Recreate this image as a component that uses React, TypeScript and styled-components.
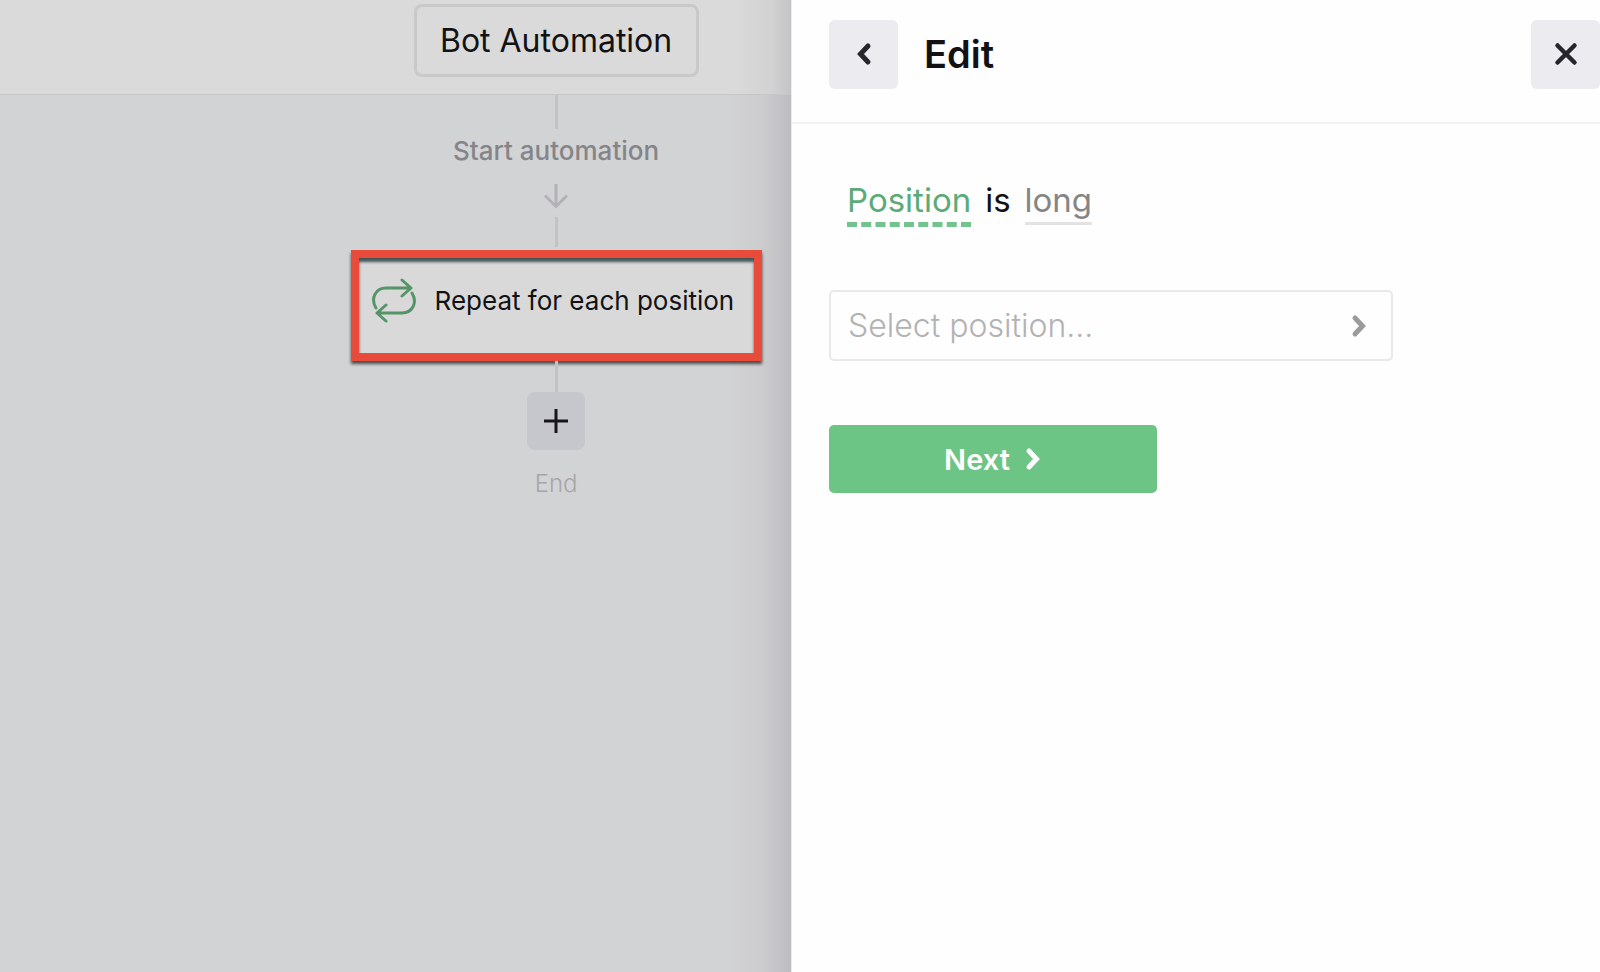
import React from "react";
import styled, { createGlobalStyle } from "styled-components";

const GlobalStyle = createGlobalStyle`
  *, *::before, *::after { box-sizing: border-box; }
  body {
    margin: 0;
    font-family: Inter, "Liberation Sans", sans-serif;
    color: #121214;
    background: #fefefe;
  }
  button, input, select { font: inherit; color: inherit; margin: 0; }
`;

const Page = styled.div`
  display: grid;
  grid-template-columns: minmax(0, 791fr) minmax(0, 809fr);
  min-height: 100vh;
`;

const Workspace = styled.main`
  display: flex;
  flex-direction: column;
  background: linear-gradient(to left, #bcbbbf 0, #c5c5c9 14px, #cdcdcf 32px, #d2d3d5 64px);
`;

const WorkspaceHeader = styled.header`
  display: flex;
  justify-content: center;
  height: 95px;
  padding: 4px 0 0 40.6%;
  border-bottom: 1px solid #c5c6c8;
  background: linear-gradient(to left, #c4c4c6 0, #d2d2d3 20px, #dadada 56px);
`;

const AutomationName = styled.input`
  width: 285px;
  height: 73px;
  padding: 0;
  border: 3px solid #c9c9ca;
  border-radius: 8px;
  background: transparent;
  font-size: 32px;
  text-align: center;
`;

const Flow = styled.section`
  display: flex;
  flex-direction: column;
  align-items: center;
  padding-left: 40.6%;
`;

const Connector = styled.div<{ $length: number }>`
  width: 3px;
  height: ${(p) => p.$length}px;
  background: #c3c3c6;
`;

const StartLabel = styled.p`
  margin: 6px 0 16px;
  font-size: 26px;
  line-height: 32px;
  font-weight: 500;
  color: #858589;
  white-space: nowrap;
`;

const FlowArrow = styled.svg`
  display: block;
  width: 26px;
  height: 26px;
  margin-bottom: 8px;
  flex: none;
`;

const Step = styled.button`
  display: flex;
  align-items: flex-start;
  gap: 18px;
  flex: none;
  width: 411px;
  height: 111px;
  margin-top: 3px;
  padding: 20px 12px;
  border: 8px solid #e94b3a;
  background: #d9d9d9;
  box-shadow: 0 3px 3px rgba(0, 0, 0, 0.65), inset 0 4px 3px rgba(0, 30, 30, 0.7);
  font-size: 26px;
  line-height: 46px;
  white-space: nowrap;
  svg { flex: none; }
`;

const AddStep = styled.button`
  display: grid;
  place-items: center;
  width: 58px;
  height: 58px;
  padding: 0;
  border: 0;
  border-radius: 8px;
  background: #c6c7cd;
`;

const EndLabel = styled.p`
  margin: 18px 0 0;
  font-size: 24px;
  line-height: 32px;
  font-weight: 300;
  color: #a6a6aa;
`;

const Panel = styled.aside`
  display: flex;
  flex-direction: column;
  border-left: 1px solid #ececef;
  background: #fefefe;
`;

const PanelHeader = styled.header`
  display: flex;
  align-items: center;
  height: 124px;
  padding: 0 0 14px 37px;
  border-bottom: 2px solid #f2f2f3;
`;

const SquareButton = styled.button`
  display: grid;
  place-items: center;
  width: 69px;
  height: 69px;
  padding: 0;
  border: 0;
  border-radius: 6px;
  background: #ebebf0;
`;

const PanelTitle = styled.h1`
  flex: 1;
  margin: 0 0 0 26px;
  font-size: 38px;
  line-height: 44px;
  font-weight: 600;
`;

const PanelBody = styled.form`
  display: flex;
  flex-direction: column;
  align-items: flex-start;
  padding: 55px 37px;
`;

const Sentence = styled.div`
  display: flex;
  align-items: flex-start;
  gap: 14px;
  height: 48px;
  padding-left: 18px;
  font-size: 33px;
  line-height: 43px;
`;

const Term = styled.button<{ $active?: boolean }>`
  padding: 0;
  border: 0;
  border-bottom: ${(p) => (p.$active ? "5px dashed #72c38d" : "3px solid #e3e3e3")};
  background: none;
  line-height: 43px;
  color: ${(p) => (p.$active ? "#5bab78" : "#858585")};
`;

const PickerField = styled.label`
  display: grid;
  grid-template-columns: minmax(0, 1fr);
  align-items: center;
  width: 100%;
  max-width: 564px;
  margin-top: 63px;

  > * { grid-area: 1 / 1; }
  > svg {
    justify-self: end;
    margin-right: 25px;
    pointer-events: none;
  }
`;

const Picker = styled.select`
  appearance: none;
  width: 100%;
  height: 71px;
  padding: 0 56px 0 17px;
  border: 2px solid #e9e9e9;
  border-radius: 5px;
  background: #fefefe;
  font-size: 32px;
  font-weight: 300;
  color: #b2b2b2;
`;

const NextButton = styled.button`
  display: flex;
  align-items: center;
  justify-content: center;
  gap: 14px;
  width: 328px;
  height: 68px;
  margin-top: 64px;
  padding: 0;
  border: 0;
  border-radius: 5px;
  background: #6cc485;
  color: #fefefe;
  font-size: 29px;
  font-weight: 600;
`;

const Chevron = ({ left, color }: { left?: boolean; color: string }) => (
  <svg width="18" height="24" viewBox="0 0 18 24" fill="none" aria-hidden="true">
    <path
      d={left ? "M13 4 5.500 12l7.500 8" : "M5 4l7.500 8L5 20"}
      stroke={color}
      strokeWidth="5"
      strokeLinecap="round"
    />
  </svg>
);

export default function App() {
  return (
    <>
      <GlobalStyle />
      <Page>
        <Workspace>
          <WorkspaceHeader>
            <AutomationName aria-label="Automation name" defaultValue="Bot Automation" />
          </WorkspaceHeader>
          <Flow>
            <Connector $length={34} />
            <StartLabel>Start automation</StartLabel>
            <FlowArrow viewBox="0 0 26 26" fill="none" aria-hidden="true">
              <path d="M13 1v22M2 12.500l11 11 11-11" stroke="#b3b3b7" strokeWidth="3" />
            </FlowArrow>
            <Connector $length={30} />
            <Step type="button">
              <svg width="46" height="46" viewBox="0 0 46 46" fill="none" aria-hidden="true">
                <g stroke="#559468" strokeWidth="3" strokeLinecap="round" strokeLinejoin="round">
                  <path d="M5 30C-1 20 5 10 15 10h25M31 2l9 8-9 8" />
                  <path d="M41 15c6 10 0 20-10 20H6M15 27l-9 8 9 8" />
                </g>
              </svg>
              Repeat for each position
            </Step>
            <Connector $length={31} />
            <AddStep type="button" aria-label="Add step">
              <svg width="24" height="24" viewBox="0 0 24 24" aria-hidden="true">
                <path d="M12 0v24M0 12h24" stroke="#17171b" strokeWidth="3" />
              </svg>
            </AddStep>
            <EndLabel>End</EndLabel>
          </Flow>
        </Workspace>
        <Panel>
          <PanelHeader>
            <SquareButton type="button" aria-label="Back">
              <Chevron left color="#26262c" />
            </SquareButton>
            <PanelTitle>Edit</PanelTitle>
            <SquareButton type="button" aria-label="Close">
              <svg width="24" height="24" viewBox="0 0 24 24" aria-hidden="true">
                <path
                  d="m3.500 3.500 17 17M20.500 3.500l-17 17"
                  stroke="#26262c"
                  strokeWidth="4.500"
                  strokeLinecap="round"
                />
              </svg>
            </SquareButton>
          </PanelHeader>
          <PanelBody onSubmit={(e: React.FormEvent) => e.preventDefault()}>
            <Sentence>
              <Term type="button" $active>Position</Term>
              <span>is</span>
              <Term type="button">long</Term>
            </Sentence>
            <PickerField>
              <Picker aria-label="Position" defaultValue="">
                <option value="">Select position...</option>
              </Picker>
              <Chevron color="#9b9b9b" />
            </PickerField>
            <NextButton type="submit">
              Next
              <Chevron color="#fefefe" />
            </NextButton>
          </PanelBody>
        </Panel>
      </Page>
    </>
  );
}
